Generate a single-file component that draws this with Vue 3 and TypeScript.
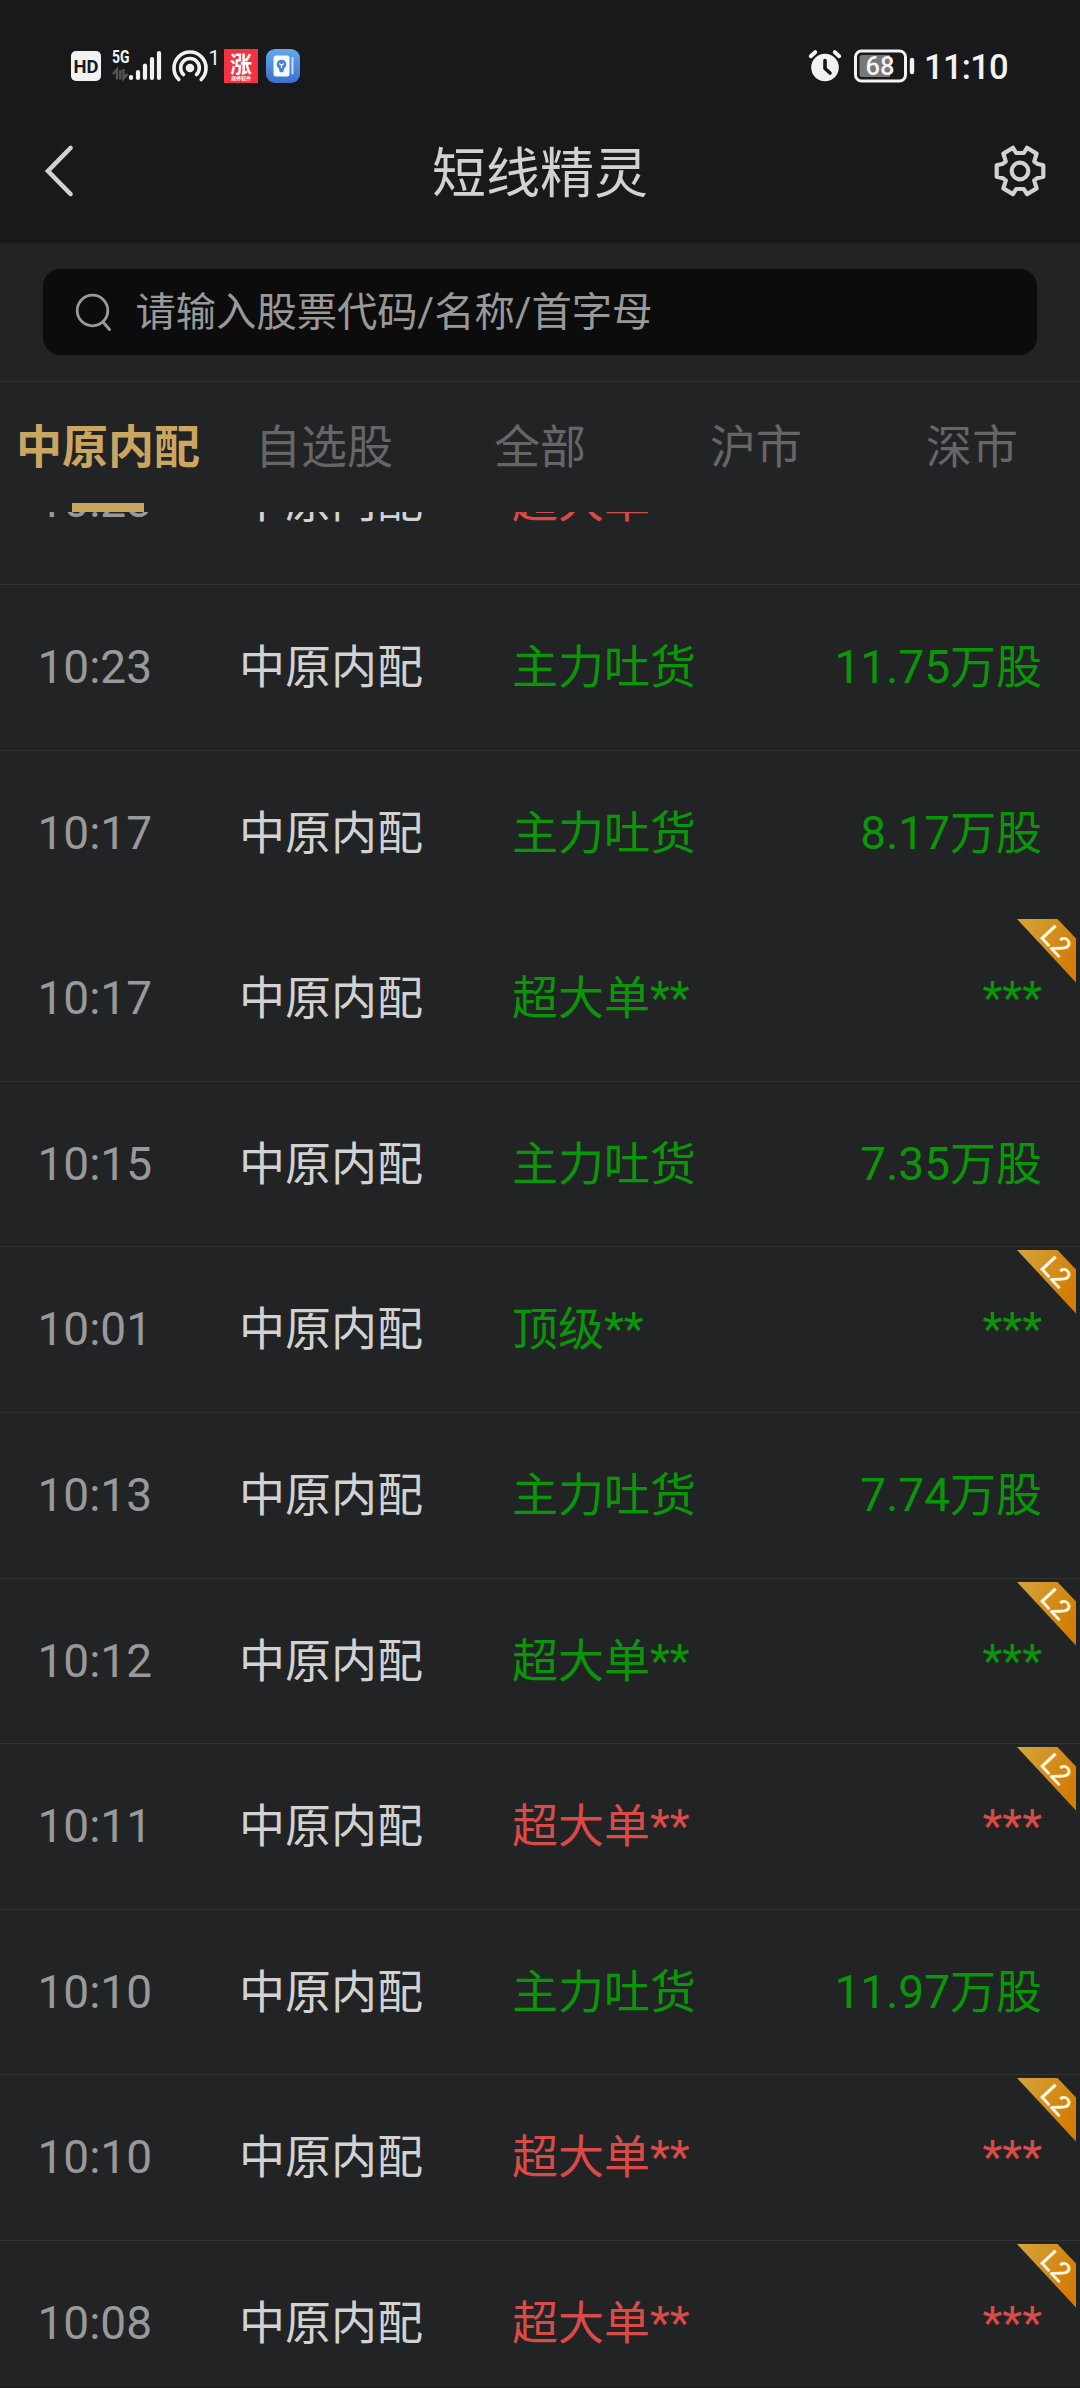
<script setup lang="ts">
interface Alert {
  time: string
  kind: string
  amount: string
  tone: 'up' | 'down'
  l2?: boolean
  plain?: boolean
}

const stock = '中原内配'
const tabs: string[] = [stock, '自选股', '全部', '沪市', '深市']

const alerts: Alert[] = [
  { time: '10:23', kind: '超大单**', amount: '***', tone: 'up', l2: true },
  { time: '10:23', kind: '主力吐货', amount: '11.75万股', tone: 'down' },
  { time: '10:17', kind: '主力吐货', amount: '8.17万股', tone: 'down', plain: true },
  { time: '10:17', kind: '超大单**', amount: '***', tone: 'down', l2: true },
  { time: '10:15', kind: '主力吐货', amount: '7.35万股', tone: 'down' },
  { time: '10:01', kind: '顶级**', amount: '***', tone: 'down', l2: true },
  { time: '10:13', kind: '主力吐货', amount: '7.74万股', tone: 'down' },
  { time: '10:12', kind: '超大单**', amount: '***', tone: 'down', l2: true },
  { time: '10:11', kind: '超大单**', amount: '***', tone: 'up', l2: true },
  { time: '10:10', kind: '主力吐货', amount: '11.97万股', tone: 'down' },
  { time: '10:10', kind: '超大单**', amount: '***', tone: 'up', l2: true },
  { time: '10:08', kind: '超大单**', amount: '***', tone: 'up', l2: true },
]
</script>

<template>
  <div class="screen">
    <header class="top">
      <div class="status">
        <svg class="hd" width="30" height="30" viewBox="0 0 30 30">
          <rect width="30" height="30" rx="5" fill="#f2f2f2" />
          <text x="15" y="21.5" text-anchor="middle" textLength="25" lengthAdjust="spacingAndGlyphs" font-size="19" font-weight="700" fill="#19191b">HD</text>
        </svg>
        <svg class="signal" width="50" height="34" viewBox="0 0 50 34">
          <text x="0" y="14" textLength="17.500" lengthAdjust="spacingAndGlyphs" font-size="19" font-weight="700" fill="#f2f2f2">5G</text>
          <path d="M1 25l4-4.500V30.500M8.300 21v9.500M11.500 20v9.500l4-4.500" fill="none" stroke="#555557" stroke-width="2.400" />
          <path d="M19 28.500v1M26 23.500v6M33 17v12.500M40 10.500v19M47 4.500v25" transform="translate(0 -.5)" stroke="#f2f2f2" stroke-width="4.200" stroke-linecap="round" />
        </svg>
        <svg class="hotspot" width="46" height="34" viewBox="0 0 46 34">
          <g fill="none" stroke="#f2f2f2" stroke-width="3.600" stroke-linecap="round">
            <path d="M6.800 30.500A16 16 0 1 1 29.200 30.500" />
            <path d="M11.500 25.500A9.300 9.300 0 1 1 24.500 25.500" />
          </g>
          <circle cx="18" cy="19" r="4.300" fill="#f2f2f2" />
          <text x="36.500" y="15.500" font-size="20.500" fill="#f2f2f2">1</text>
        </svg>
        <svg class="rise" width="34" height="34" viewBox="0 0 34 34">
          <rect width="34" height="34" fill="#f33340" />
          <text x="17" y="22.500" text-anchor="middle" font-size="22" font-weight="700" fill="#fff">涨</text>
          <text x="17" y="31" text-anchor="middle" font-size="5" font-weight="700" fill="#fff">涨停软件</text>
        </svg>
        <svg class="tips" width="34" height="34" viewBox="0 0 34 34">
          <defs>
            <linearGradient id="tips-bg" x1="0" y1="0" x2="0" y2="1">
              <stop offset="0" stop-color="#63a9ea" />
              <stop offset="1" stop-color="#3c6fd0" />
            </linearGradient>
          </defs>
          <rect width="34" height="34" rx="9" fill="url(#tips-bg)" />
          <rect x="7.500" y="6.500" width="16" height="21" rx="2.500" fill="#f4faff" />
          <path d="M26.500 9v15.500" stroke="#c5dcf6" stroke-width="2" stroke-linecap="round" />
          <circle cx="15.500" cy="15.500" r="4.800" fill="#4682d8" />
          <path d="M13.200 14.500l2.300 2 2.300-2M15.500 16.500v3" fill="none" stroke="#f4faff" stroke-width="1.200" />
          <path d="M13.200 19h4.600v3l-1.300 1.300h-2L13.200 22z" fill="#4682d8" />
        </svg>
        <span class="spacer"></span>
        <svg class="alarm" width="34" height="34" viewBox="0 0 34 34">
          <circle cx="17" cy="18.500" r="13.800" fill="#f2f2f2" />
          <path d="M2.800 7.200l4.400-4M31.200 7.200l-4.400-4" stroke="#f2f2f2" stroke-width="4" stroke-linecap="round" />
          <path d="M17 11.500v8l5 4.500" fill="none" stroke="#19191b" stroke-width="3.600" stroke-linecap="round" stroke-linejoin="round" />
        </svg>
        <svg class="battery" width="61" height="34" viewBox="0 0 61 34">
          <rect x="1.500" y="2" width="50" height="30" rx="6" fill="none" stroke="#f2f2f2" stroke-width="3" />
          <path d="M8 6h28v22H8q-2.500 0-2.500-2.500v-17Q5.500 6 8 6z" fill="#78787a" />
          <path d="M58 11v12" stroke="#f2f2f2" stroke-width="4.400" stroke-linecap="round" />
          <text x="26" y="26" text-anchor="middle" font-size="25.500" font-weight="500" fill="#f2f2f2">68</text>
        </svg>
        <span class="clock">11:10</span>
      </div>
      <div class="titlebar">
        <svg class="back" width="30" height="54" viewBox="0 0 30 54">
          <path d="M26.500 4L4 27l22.500 23" fill="none" stroke="#d2d2d2" stroke-width="4.600" stroke-linecap="round" />
        </svg>
        <h1>短线精灵</h1>
        <svg class="gear" width="54" height="54" viewBox="-27 -27 54 54">
          <g fill="none" stroke="#d2d2d2" stroke-width="4.200" stroke-linejoin="round">
            <path d="M-3.800-18H3.800L7-23.200 16.600-17.400 14.200-9.500 17-7.300 23.300-5.800V5.800L17 7.300 14.200 9.500 16.600 17.400 7 23.200 3.800 18H-3.800L-7 23.200-16.600 17.400-14.200 9.500-17 7.300-23.300 5.800V-5.800L-17-7.300-14.200-9.500-16.600-17.400-7-23.200Z" />
            <circle r="8.300" />
          </g>
        </svg>
      </div>
    </header>

    <div class="search-wrap">
      <div class="search">
        <svg width="40" height="42" viewBox="0 0 40 42">
          <circle cx="18.500" cy="19.500" r="15.300" fill="none" stroke="#999" stroke-width="2.800" />
          <path d="M29 31l6.500 7.500" stroke="#999" stroke-width="3" stroke-linecap="round" />
        </svg>
        <span>请输入股票代码/名称/首字母</span>
      </div>
    </div>

    <nav class="tabs">
      <div v-for="(tab, i) in tabs" :key="tab" class="tab" :class="{ active: i === 0 }">{{ tab }}</div>
    </nav>

    <main class="list">
      <div class="rows">
        <div v-for="(a, i) in alerts" :key="i" class="row" :class="[a.tone, { plain: a.plain }]">
          <span class="time">{{ a.time }}</span>
          <span class="name">{{ stock }}</span>
          <span class="kind">{{ a.kind }}</span>
          <span class="amount">{{ a.amount }}</span>
          <svg v-if="a.l2" class="badge" width="59" height="64" viewBox="0 0 59 64">
            <defs>
              <linearGradient id="l2-bg" x1="0" y1="0" x2="1" y2="0.500">
                <stop offset="0" stop-color="#d4a53a" />
                <stop offset="1" stop-color="#d27d08" />
              </linearGradient>
            </defs>
            <path d="M0 0H40.500L59 19.500V63.500Z" fill="url(#l2-bg)" />
            <text transform="translate(22 17.500) rotate(47)" font-size="27" fill="#fff8e0" stroke="#fff8e0" stroke-width=".5">L2</text>
          </svg>
        </div>
      </div>
    </main>
  </div>
</template>

<style>
body {
  margin: 0;
  background: #222325;
}
</style>

<style scoped>
.screen {
  width: 1080px;
  height: 2388px;
  box-sizing: border-box;
  display: flex;
  flex-direction: column;
  overflow: hidden;
  border-bottom: 1px solid #1e191b;
  background: #222325;
  font-family: Roboto, 'Noto Sans CJK SC', sans-serif;
}

.top {
  height: 243px;
  background: #19191b;
}

.status {
  display: flex;
  align-items: center;
  height: 132px;
  padding: 0 71px;
}
.status svg {
  flex: none;
  overflow: visible;
}
.signal {
  margin-left: 11px;
}
.hotspot {
  margin-left: 10px;
}
.rise {
  margin-left: 6px;
}
.tips {
  margin-left: 8px;
}
.spacer {
  flex: 1;
}
.battery {
  margin-left: 12px;
}
.clock {
  margin-left: 9px;
  width: 85px;
  padding-top: 2px;
  font-size: 34.500px;
  font-weight: 500;
  line-height: 40px;
  letter-spacing: -0.700px;
  color: #f2f2f2;
  white-space: nowrap;
}

.titlebar {
  display: flex;
  align-items: center;
  justify-content: space-between;
  height: 78px;
  padding: 0 33px 0 44px;
}
.titlebar h1 {
  margin: 8px 0 0 13px;
  font-size: 54px;
  font-weight: 400;
  line-height: 78px;
  color: #d2d2d2;
}

.search-wrap {
  height: 139px;
  box-sizing: border-box;
  padding: 26px 43px 0;
  border-bottom: 1px solid #303133;
}
.search {
  display: flex;
  align-items: center;
  height: 86px;
  padding-left: 31px;
  border-radius: 17px;
  background: #0c0c0c;
  font-size: 40.300px;
  line-height: 86px;
  color: #999;
}
.search span {
  margin-left: 21.500px;
  padding-top: 2px;
}

.tabs {
  display: flex;
  height: 130px;
}
.tab {
  position: relative;
  flex: 1 1 0;
  min-width: 0;
  text-align: center;
  font-size: 46px;
  line-height: 130px;
  color: #666;
  white-space: nowrap;
}
.tab.active {
  font-weight: 700;
  color: #cba660;
}
.tab.active::after {
  content: '';
  position: absolute;
  left: 72px;
  bottom: 0;
  width: 72px;
  height: 9px;
  background: #cba660;
}

.list {
  flex: 1;
  min-height: 0;
  overflow: hidden;
}
.rows {
  margin-top: -92.600px;
}
.row {
  position: relative;
  display: flex;
  box-sizing: border-box;
  height: 165.600px;
  padding: 0 38px 0 37.500px;
  border-bottom: 1px solid #303133;
  font-size: 46px;
  line-height: 165px;
  white-space: nowrap;
}
.row.plain {
  border-bottom-color: transparent;
}
.time {
  width: 201.500px;
  color: #999;
}
.name {
  width: 273px;
  color: #d2d2d2;
}
.kind {
  flex: 1;
}
.up .kind,
.up .amount {
  color: #d94b46;
}
.down .kind,
.down .amount {
  color: #099609;
}
.badge {
  position: absolute;
  top: 3px;
  right: 4px;
  overflow: visible;
}
</style>
